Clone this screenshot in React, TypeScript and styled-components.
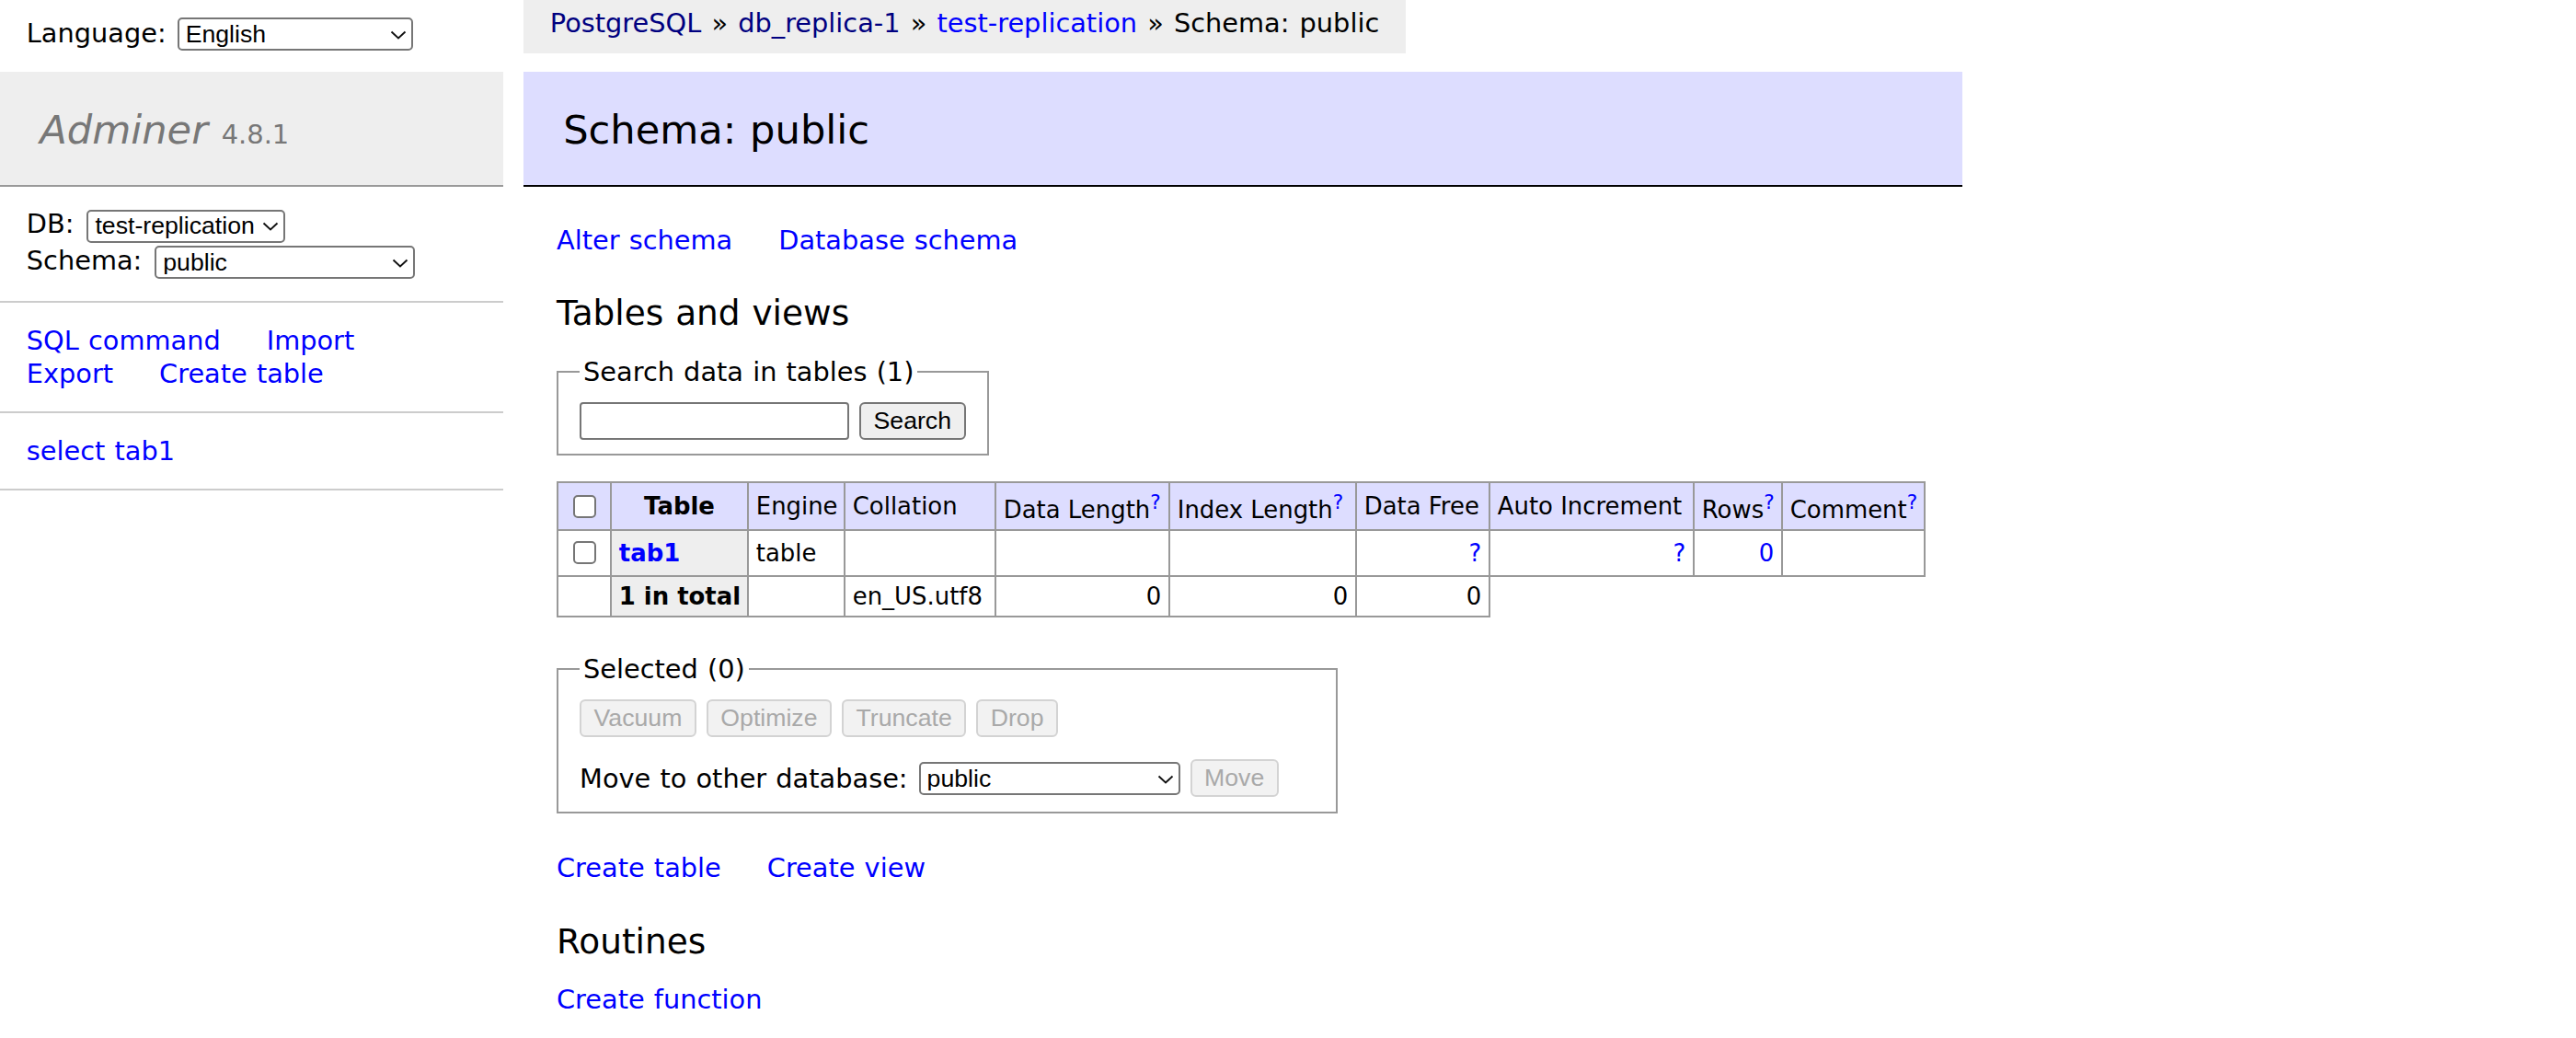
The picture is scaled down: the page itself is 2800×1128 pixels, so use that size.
import React from 'react';
import styled, { createGlobalStyle } from 'styled-components';

const Global = createGlobalStyle`
  html, body { margin: 0; padding: 0; background: #fff; }
  body {
    font: 28.8px/1.25 "DejaVu Sans", Verdana, sans-serif;
    word-spacing: 1px;
    color: #000;
  }
  a { text-decoration: none; }
`;

const Page = styled.div`
  display: grid;
  grid-template-columns: 569px max-content;
  grid-template-rows: 57.6px auto;
  align-items: start;
`;

/* ---------- form controls ---------- */
const SelectWrap = styled.span<{ $w: number }>`
  position: relative;
  display: inline-block;
  flex: none;
  width: ${(p) => p.$w}px;
  height: 36px;
`;

const NativeSelect = styled.select`
  appearance: none;
  -webkit-appearance: none;
  box-sizing: border-box;
  width: 100%;
  height: 100%;
  margin: 0;
  padding: 0 30px 0 7px;
  border: 2px solid #767676;
  border-radius: 5px;
  background: #fff;
  color: #000;
  word-spacing: normal;
  font: 26.67px/1 "Liberation Sans", Arial, sans-serif;
`;

const Chevron = styled.svg`
  position: absolute;
  right: 7px;
  top: 50%;
  margin-top: -4px;
  width: 18px;
  height: 10px;
  pointer-events: none;
`;

function Select({ w, value }: { w: number; value: string }) {
  return (
    <SelectWrap $w={w}>
      <NativeSelect defaultValue={value}>
        <option>{value}</option>
      </NativeSelect>
      <Chevron viewBox="0 0 18 10">
        <path d="M1.5 1.5 L9 8.5 L16.5 1.5" fill="none" stroke="#111" strokeWidth="1.9" />
      </Chevron>
    </SelectWrap>
  );
}

const TextInput = styled.input`
  box-sizing: border-box;
  width: 293px;
  height: 41px;
  margin: 0;
  padding: 0 4px;
  border: 2px solid #767676;
  border-radius: 4px;
  background: #fff;
  font: 26.67px "Liberation Sans", Arial, sans-serif;
`;

const Button = styled.button`
  box-sizing: border-box;
  height: 41px;
  margin: 0;
  padding: 0 13.5px;
  border: 2px solid #767676;
  border-radius: 6px;
  background: #efefef;
  color: #000;
  word-spacing: normal;
  font: 26.67px/1 "Liberation Sans", Arial, sans-serif;
  &:disabled {
    border-color: #d3d3d3;
    background: #f2f2f2;
    color: #a9a9a9;
  }
`;

const Check = styled.input.attrs({ type: 'checkbox' })`
  appearance: none;
  -webkit-appearance: none;
  box-sizing: border-box;
  display: block;
  width: 25px;
  height: 25px;
  margin: 6px 6px 6px 8px;
  border: 2px solid #767676;
  border-radius: 5px;
  background: #fff;
`;

/* ---------- top row ---------- */
const Lang = styled.div`
  grid-column: 1;
  grid-row: 1;
  display: flex;
  align-items: center;
  gap: 12px;
  height: 36px;
  padding: 19px 0 0 28.8px;
`;

const Label = styled.span`
  line-height: 36px;
  padding-bottom: 2px;
  white-space: nowrap;
`;

const Breadcrumb = styled.p`
  grid-column: 2;
  grid-row: 1;
  justify-self: start;
  margin: 0;
  height: 57.6px;
  line-height: 51.84px;
  padding: 0 28.8px;
  background: #eee;
  white-space: nowrap;
  word-spacing: 2px;
`;

const A = styled.a<{ $visited?: boolean }>`
  color: ${(p) => (p.$visited ? 'navy' : 'blue')};
`;

/* ---------- sidebar ---------- */
const Menu = styled.nav`
  grid-column: 1;
  grid-row: 2;
  width: 547px;
  margin-top: 20px;
  padding-bottom: 60px;
`;

const Logo = styled.h1`
  margin: 0;
  padding: 36.8px 43.2px 32.3px;
  font-size: 43.2px;
  line-height: 1.25;
  font-weight: normal;
  color: #777;
  background: #eee;
  border-bottom: 2px solid #999;
`;

const LogoName = styled.a`
  color: #777;
  font-style: italic;
`;

const Version = styled.span`
  color: #777;
  font-size: 28.94px;
`;

const MenuBlock = styled.div`
  padding: 23.04px 28.8px;
  border-bottom: 2px solid #ccc;
`;

const DbRow = styled.div<{ $h: number }>`
  display: flex;
  align-items: center;
  gap: 14px;
  height: ${(p) => p.$h}px;
`;

const DbLabel = styled.span`
  line-height: 36px;
  padding-bottom: 4px;
`;

const LinkRow = styled.div<{ $mt?: number }>`
  display: flex;
  gap: 50px;
  margin-top: ${(p) => p.$mt ?? 0}px;
  line-height: 36px;
  white-space: nowrap;
`;

const TableList = styled.ul`
  margin: 0;
  padding: 23.04px 28.8px;
  list-style: none;
  border-bottom: 2px solid #ccc;
  line-height: 36px;
  white-space: nowrap;
`;

/* ---------- content ---------- */
const Content = styled.main`
  grid-column: 2;
  grid-row: 2;
  padding: 20px 40px 40px 36px;
`;

const Title = styled.h2`
  margin: 0 0 40px -36px;
  padding: 36.8px 43.2px 32.3px;
  font-size: 43.2px;
  line-height: 1.25;
  font-weight: normal;
  background: #ddf;
  border-bottom: 2px solid #000;
`;

const Heading = styled.h3`
  margin: 37.44px 0 0;
  padding-top: 2px;
  font-size: 37.44px;
  line-height: 44.8px;
  font-weight: normal;
`;

const Fieldset = styled.fieldset<{ $flush?: boolean }>`
  display: block;
  width: fit-content;
  margin: ${(p) => (p.$flush ? 0 : 23.04)}px 14.4px 0 0;
  padding: 14.4px 23.04px;
  border: 2px solid #999;
  min-inline-size: auto;
`;

const Legend = styled.legend`
  padding: 0 4px;
  line-height: 36px;
`;

const ControlRow = styled.div<{ $h: number }>`
  display: flex;
  align-items: center;
  gap: 11px;
  height: ${(p) => p.$h}px;
  white-space: nowrap;
`;

const MoveRow = styled(ControlRow)`
  margin: 22px 39px 0 0;
`;

const MoveLabel = styled.span`
  line-height: 36px;
  margin-right: 1px;
`;

const Grid = styled.table`
  margin: 28.2px 40px 0 0;
  border-collapse: collapse;
  table-layout: fixed;
  width: 1486px;
  font-size: 25.92px;
  line-height: 32.4px;
  word-spacing: normal;
`;

const Col = styled.col<{ $w: number }>`
  width: ${(p) => p.$w}px;
`;

const Td = styled.td<{ $num?: boolean; $head?: boolean }>`
  border: 2px solid #999;
  padding: 5.18px 7.78px;
  text-align: ${(p) => (p.$num ? 'right' : 'left')};
  white-space: nowrap;
  background: ${(p) => (p.$head ? '#ddf' : 'transparent')};
  vertical-align: middle;
`;

const HeadTh = styled.th`
  border: 2px solid #999;
  padding: 5.18px 12.96px;
  background: #ddf;
  text-align: center;
  font-weight: bold;
  vertical-align: middle;
`;

const RowTh = styled.th`
  border: 2px solid #999;
  padding: 5.18px 7.78px;
  background: #eee;
  text-align: left;
  font-weight: bold;
  white-space: nowrap;
  vertical-align: middle;
`;

const Help = styled.a`
  color: blue;
`;

const Footer = styled.div`
  padding: 38px 0 14.4px;
`;

const Doc = () => (
  <Help href="#">
    <sup>?</sup>
  </Help>
);

const cols = [58, 149, 105, 164, 189, 203, 145, 222, 96, 155];

export default function App() {
  return (
    <>
      <Global />
      <Page>
        <Lang>
          <Label>Language:</Label>
          <Select w={256} value="English" />
        </Lang>

        <Breadcrumb>
          <A $visited href="#">PostgreSQL</A> » <A $visited href="#">db_replica-1</A> »{' '}
          <A href="#">test-replication</A> » Schema: public
        </Breadcrumb>

        <Menu>
          <Logo>
            <LogoName href="#">Adminer</LogoName> <Version>4.8.1</Version>
          </Logo>
          <MenuBlock>
            <DbRow $h={39.5}>
              <DbLabel>DB:</DbLabel>
              <Select w={216} value="test-replication" />
            </DbRow>
            <DbRow $h={39}>
              <DbLabel>Schema:</DbLabel>
              <Select w={283} value="public" />
            </DbRow>
          </MenuBlock>
          <MenuBlock>
            <LinkRow>
              <A href="#">SQL command</A>
              <A href="#">Import</A>
            </LinkRow>
            <LinkRow>
              <A href="#">Export</A>
              <A href="#">Create table</A>
            </LinkRow>
          </MenuBlock>
          <TableList>
            <li>
              <A href="#">select</A> <A href="#">tab1</A>
            </li>
          </TableList>
        </Menu>

        <Content>
          <Title>Schema: public</Title>
          <LinkRow>
            <A href="#">Alter schema</A>
            <A href="#">Database schema</A>
          </LinkRow>

          <Heading>Tables and views</Heading>

          <form onSubmit={(e) => e.preventDefault()}>
            <Fieldset>
              <Legend>Search data in tables (1)</Legend>
              <ControlRow $h={42}>
                <TextInput type="search" />
                <Button type="button">Search</Button>
              </ControlRow>
            </Fieldset>

            <Grid>
              <colgroup>
                {cols.map((w, i) => (
                  <Col key={i} $w={w} />
                ))}
              </colgroup>
              <thead>
                <tr>
                  <Td $head>
                    <Check />
                  </Td>
                  <HeadTh>Table</HeadTh>
                  <Td $head>Engine</Td>
                  <Td $head>Collation</Td>
                  <Td $head>
                    Data Length<Doc />
                  </Td>
                  <Td $head>
                    Index Length<Doc />
                  </Td>
                  <Td $head>Data Free</Td>
                  <Td $head>Auto Increment</Td>
                  <Td $head>
                    Rows<Doc />
                  </Td>
                  <Td $head>
                    Comment<Doc />
                  </Td>
                </tr>
              </thead>
              <tbody>
                <tr>
                  <Td>
                    <Check />
                  </Td>
                  <RowTh>
                    <A href="#">tab1</A>
                  </RowTh>
                  <Td>table</Td>
                  <Td />
                  <Td $num />
                  <Td $num />
                  <Td $num>
                    <A href="#">?</A>
                  </Td>
                  <Td $num>
                    <A href="#">?</A>
                  </Td>
                  <Td $num>
                    <A href="#">0</A>
                  </Td>
                  <Td />
                </tr>
                <tr>
                  <Td />
                  <RowTh>1 in total</RowTh>
                  <Td />
                  <Td>en_US.utf8</Td>
                  <Td $num>0</Td>
                  <Td $num>0</Td>
                  <Td $num>0</Td>
                </tr>
              </tbody>
            </Grid>

            <Footer>
              <Fieldset $flush>
                <Legend>Selected (0)</Legend>
                <ControlRow $h={42}>
                  <Button type="button" disabled>
                    Vacuum
                  </Button>
                  <Button type="button" disabled>
                    Optimize
                  </Button>
                  <Button type="button" disabled>
                    Truncate
                  </Button>
                  <Button type="button" disabled>
                    Drop
                  </Button>
                </ControlRow>
                <MoveRow $h={44}>
                  <MoveLabel>Move to other database:</MoveLabel>
                  <Select w={284} value="public" />
                  <Button type="button" disabled>
                    Move
                  </Button>
                </MoveRow>
              </Fieldset>
            </Footer>
          </form>

          <LinkRow $mt={26.5}>
            <A href="#">Create table</A>
            <A href="#">Create view</A>
          </LinkRow>

          <Heading>Routines</Heading>
          <LinkRow $mt={23.04}>
            <A href="#">Create function</A>
          </LinkRow>
        </Content>
      </Page>
    </>
  );
}
